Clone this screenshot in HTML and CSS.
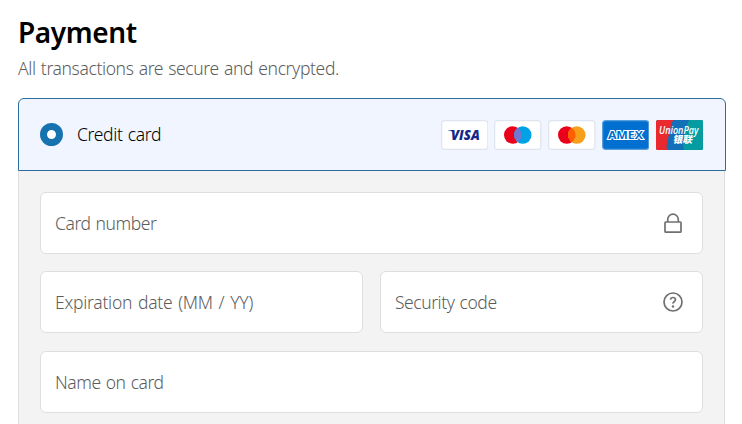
FILE: index.html
```html
<!DOCTYPE html>
<html lang="en">
<head>
  <meta charset="UTF-8">
  <title>Payment</title>
  <link rel="stylesheet" href="styles.css">
</head>
<body>
  <section class="payment">
    <h2 class="title">Payment</h2>
    <p class="subtitle">All transactions are secure and encrypted.</p>

    <div class="method">
      <span class="radio"></span>
      <span class="method-name">Credit card</span>
      <div class="brands">
        <svg class="brand" viewBox="0 0 38 24">
          <rect class="brand-box" x=".5" y=".5" width="37" height="23" rx="2.5"/>
          <path d="M5.6 7.9h3.4q1 .3 1.3 2.6l-1-1q-1.2-1-3.7-1.3z" fill="#142688"/>
          <text class="visa" x="8" y="15.6" textLength="23" lengthAdjust="spacingAndGlyphs">VISA</text>
        </svg>
        <svg class="brand" viewBox="0 0 38 24">
          <rect class="brand-box" x=".5" y=".5" width="37" height="23" rx="2.5"/>
          <circle cx="15" cy="12" r="7" fill="#eb001b"/>
          <circle cx="23" cy="12" r="7" fill="#00a2e5"/>
          <path d="M19 6.25a7 7 0 0 1 0 11.5a7 7 0 0 1 0-11.5z" fill="#7375cf"/>
        </svg>
        <svg class="brand" viewBox="0 0 38 24">
          <rect class="brand-box" x=".5" y=".5" width="37" height="23" rx="2.5"/>
          <circle cx="15" cy="12" r="7" fill="#eb001b"/>
          <circle cx="23" cy="12" r="7" fill="#f79e1b"/>
          <path d="M19 6.25a7 7 0 0 1 0 11.5a7 7 0 0 1 0-11.5z" fill="#ff5f00"/>
        </svg>
        <svg class="brand" viewBox="0 0 38 24">
          <rect x=".5" y=".5" width="37" height="23" rx="2.5" fill="#006fcf" stroke="#5a9fdc"/>
          <text class="amex" x="4.7" y="15" textLength="28" lengthAdjust="spacingAndGlyphs">AMEX</text>
        </svg>
        <svg class="brand" viewBox="0 0 38 24">
          <rect width="38" height="24" rx="1.5" fill="#049ca0"/>
          <path d="M1.5 0H14L9 24H1.5Q0 24 0 22.5v-21Q0 0 1.5 0z" fill="#e9292d"/>
          <path d="M14 0h13q-2 2-3 7l-2 9q-1 4 .5 8H9q-1-2 0-6l3-14q.7-3 2-4z" fill="#1370b8"/>
          <text class="union" x="2.4" y="11.2" textLength="31.5" lengthAdjust="spacingAndGlyphs">UnionPay</text>
          <text class="union-cn" x="16.6" y="18.2" transform="skewX(-10)">银联</text>
        </svg>
      </div>
    </div>

    <div class="fields">
      <div class="field">
        <span>Card number</span>
        <svg class="icon" viewBox="0 0 22 22">
          <rect x="3" y="10" width="16" height="10.2" rx=".8"/>
          <path d="M5.7 10V7.5a5.3 5.3 0 0 1 10.6 0v2.5"/>
        </svg>
      </div>
      <div class="row">
        <div class="field">
          <span class="expiry">Expiration date (MM / YY)</span>
        </div>
        <div class="field">
          <span>Security code</span>
          <svg class="icon" viewBox="0 0 22 22">
            <circle cx="11" cy="11" r="9"/>
            <path d="M8.5 8.7Q8.7 6.5 11 6.5T13.5 8.6Q13.5 9.8 12.2 10.7T11 12.7"/>
            <circle class="dot" cx="11" cy="15.5" r="1.2"/>
          </svg>
        </div>
      </div>
      <div class="field">
        <span>Name on card</span>
      </div>
    </div>
  </section>
</body>
</html>
```
FILE: styles.css
```css
html, body {
  margin: 0;
  padding: 0;
}

body {
  height: 424px;
  overflow: hidden;
  background: #fff;
  color: #000;
  font-family: "Segoe UI", "Noto Sans", "Open Sans", sans-serif;
  font-size: 17.5px;
  font-weight: 350;
}

.payment {
  width: 708px;
  margin-left: 18px;
  padding-top: 12px;
}

.title {
  margin: 0;
  font-size: 28px;
  font-weight: 600;
  line-height: 40px;
  letter-spacing: -0.4px;
}

.subtitle {
  margin: 4px 0 18px;
  line-height: 24px;
  color: #5c5c5c;
  letter-spacing: -0.38px;
  word-spacing: 1px;
}

.method {
  display: flex;
  align-items: center;
  box-sizing: border-box;
  height: 73px;
  padding: 0 22px 0 21px;
  background: #f0f5ff;
  border: 1px solid #2a6d9e;
  border-radius: 6px 6px 0 0;
}

.radio {
  box-sizing: border-box;
  width: 23px;
  height: 23px;
  margin-right: 14px;
  background: #fff;
  border: 7px solid #1773b0;
  border-radius: 50%;
}

.method-name {
  padding-bottom: 1px;
  letter-spacing: -0.35px;
  word-spacing: 1px;
}

.brands {
  display: flex;
  gap: 6.25px;
  margin-left: auto;
}

.brand {
  display: block;
  width: 47.5px;
  height: 30px;
}

.brand-box {
  fill: #fff;
  stroke: #dfe4ee;
}

.brand text {
  font-family: "Open Sans", "Noto Sans CJK SC", sans-serif;
}

.brand .visa {
  fill: #142688;
  font-size: 10.6px;
  font-style: italic;
  font-weight: 800;
}

.brand .amex {
  fill: #006fcf;
  stroke: #fff;
  stroke-width: 1.6px;
  paint-order: stroke;
  font-size: 8.6px;
  font-weight: 700;
}

.brand .union {
  fill: #fff;
  font-size: 8.4px;
  font-style: italic;
  font-weight: 600;
}

.brand .union-cn {
  fill: #fff;
  font-family: "Noto Sans CJK SC", sans-serif;
  font-size: 7.8px;
  font-weight: 900;
}

.fields {
  display: flex;
  flex-direction: column;
  box-sizing: border-box;
  width: 707px;
  height: 270px;
  padding: 21px 21px 0;
  background: #f3f3f3;
  border: 1px solid #dedede;
  border-top: 0;
}

.row {
  display: grid;
  grid-template-columns: 1fr 1fr;
  gap: 17px;
  margin: 17px 0 18px;
}

.field {
  display: flex;
  flex: none;
  align-items: center;
  justify-content: space-between;
  box-sizing: border-box;
  height: 62px;
  padding: 0 18px 0 14px;
  background: #fff;
  border: 1px solid #dedede;
  border-radius: 6px;
  color: #5c5c5c;
  letter-spacing: -0.45px;
  word-spacing: 1px;
}

.field span {
  padding-bottom: 1px;
}

.field .expiry {
  letter-spacing: -0.26px;
  word-spacing: 1.5px;
}

.icon {
  width: 22px;
  height: 22px;
  fill: none;
  stroke: #707070;
  stroke-width: 1.7px;
}

.dot {
  fill: #707070;
  stroke: none;
}
```
